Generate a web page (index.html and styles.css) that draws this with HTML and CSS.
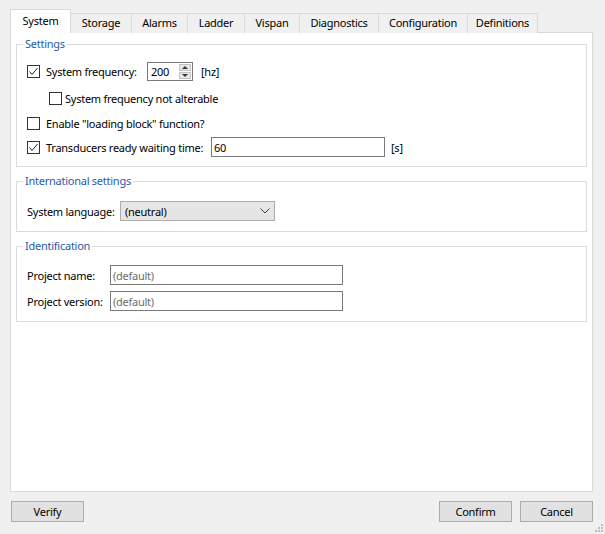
FILE: index.html
```html
<!DOCTYPE html>
<html>
<head>
<meta charset="utf-8">
<link rel="stylesheet" href="styles.css">
</head>
<body>
<div class="window">
  <div class="tabs">
    <div class="tab active">System</div>
    <div class="tab">Storage</div>
    <div class="tab">Alarms</div>
    <div class="tab">Ladder</div>
    <div class="tab">Vispan</div>
    <div class="tab">Diagnostics</div>
    <div class="tab">Configuration</div>
    <div class="tab">Definitions</div>
  </div>
  <div class="panel">
    <fieldset class="group g-settings">
      <legend>Settings</legend>
      <div class="row r1">
        <span class="check on"><svg viewBox="0 0 13 13" width="13" height="13"><path d="M2.5 6.5 L5 9.5 L10.5 3" fill="none" stroke="#222" stroke-width="1"/></svg></span>
        <span class="lbl">System frequency:</span>
        <span class="spin"><span class="spin-val">200</span><span class="spin-btns"><span class="sb up"></span><span class="sb down"></span></span></span>
        <span class="unit">[hz]</span>
      </div>
      <div class="row r2 indent">
        <span class="check"></span>
        <span class="lbl">System frequency not alterable</span>
      </div>
      <div class="row r3">
        <span class="check"></span>
        <span class="lbl">Enable "loading block" function?</span>
      </div>
      <div class="row r4">
        <span class="check on"><svg viewBox="0 0 13 13" width="13" height="13"><path d="M2.5 6.5 L5 9.5 L10.5 3" fill="none" stroke="#222" stroke-width="1"/></svg></span>
        <span class="lbl w-trans">Transducers ready waiting time:</span>
        <span class="input wide">60</span>
        <span class="unit s">[s]</span>
      </div>
    </fieldset>
    <fieldset class="group g-intl">
      <legend>International settings</legend>
      <div class="row">
        <span class="lbl w-lang">System language:</span>
        <span class="select"><span>(neutral)</span><svg width="10" height="6" viewBox="0 0 10 6"><path d="M0.5 0.5 L5 5 L9.5 0.5" fill="none" stroke="#444" stroke-width="1"/></svg></span>
      </div>
    </fieldset>
    <fieldset class="group g-ident">
      <legend>Identification</legend>
      <div class="row">
        <span class="lbl w-proj">Project name:</span>
        <span class="input proj ph">(default)</span>
      </div>
      <div class="row r-ver">
        <span class="lbl w-proj">Project version:</span>
        <span class="input proj ph">(default)</span>
      </div>
    </fieldset>
  </div>
  <div class="buttons">
    <button class="btn">Verify</button>
    <span class="spacer"></span>
    <button class="btn">Confirm</button>
    <button class="btn">Cancel</button>
  </div>
  <svg class="grip" width="9" height="9" viewBox="0 0 9 9">
    <rect x="7" y="1" width="2" height="2" fill="#bcbcbc"/>
    <rect x="4" y="4" width="2" height="2" fill="#bcbcbc"/>
    <rect x="7" y="4" width="2" height="2" fill="#bcbcbc"/>
    <rect x="1" y="7" width="2" height="2" fill="#bcbcbc"/>
    <rect x="4" y="7" width="2" height="2" fill="#bcbcbc"/>
    <rect x="7" y="7" width="2" height="2" fill="#bcbcbc"/>
  </svg>
</div>
</body>
</html>
```
FILE: styles.css
```css
* { box-sizing: border-box; }
html, body { margin: 0; padding: 0; }
body {
  background: #f0f0f0;
  font-family: "Noto Sans", "Open Sans", sans-serif;
  font-size: 11px;
  letter-spacing: -0.25px;
  color: #000;
}
.window {
  position: relative;
  width: 605px;
  height: 534px;
  display: flex;
  flex-direction: column;
}
.tabs {
  display: flex;
  align-items: flex-end;
  height: 33px;
  padding-left: 10px;
  position: relative;
  z-index: 1;
}
.tab {
  height: 20px;
  border: 1px solid #d9d9d9;
  border-bottom: none;
  margin-left: -1px;
  background: #f0f0f0;
  display: flex;
  align-items: center;
  justify-content: center;
  line-height: 1;
  padding-bottom: 2px;
}
.tab:nth-child(1) { width: 61px; margin-left: 0; }
.tab:nth-child(2) { width: 61px; margin-left: -1px; }
.tab:nth-child(3) { width: 57px; }
.tab:nth-child(4) { width: 58px; }
.tab:nth-child(5) { width: 56px; }
.tab:nth-child(6) { width: 80px; }
.tab:nth-child(7) { width: 90px; }
.tab:nth-child(8) { width: 71px; }
.tab.active {
  height: 24px;
  background: #fff;
  padding-bottom: 2px;
}
.tab.active + .tab { border-left: none; margin-left: 0; }
.panel {
  margin: -1px 12px 0 10px;
  height: 460px;
  background: #fff;
  border: 1px solid #d9d9d9;
  padding: 3px 5px 0 5px;
}
.group {
  margin: 0;
  padding: 0 10px;
  border: 1px solid #dcdcdc;
  min-width: 0;
}
.group legend {
  color: #1f5ca6;
  padding: 0 2px;
  margin-left: -4px;
  line-height: 16px;
  font-size: 11px;
}
.g-intl, .g-ident { margin-top: 6px; }
.g-settings { padding-bottom: 9px; }
.g-intl { padding-bottom: 10px; }
.g-ident { padding-bottom: 10px; }
.row {
  display: flex;
  align-items: center;
  height: 20px;
}
.r1 { margin-top: 9px; }
.r2 { margin-top: 7px; }
.r3 { margin-top: 5px; }
.r4 { margin-top: 4px; }
.g-intl .row { margin-top: 12px; }
.g-ident .row { margin-top: 11px; }
.g-ident .row.r-ver { margin-top: 6px; }
.indent { padding-left: 22px; }
.check {
  width: 13px;
  height: 13px;
  border: 1px solid #333;
  background: #fff;
  flex: none;
  margin-right: 6px;
  display: flex;
}
.indent .check { margin-right: 3px; }
.check svg { margin: -1px; }
.lbl { white-space: nowrap; }
.r1 .lbl { width: 101px; }
.spin {
  width: 46px;
  height: 19px;
  border: 1px solid #7a7a7a;
  display: flex;
  align-items: center;
  justify-content: space-between;
  padding-left: 3px;
}
.spin-btns {
  width: 12px;
  height: 15px;
  margin-right: 1px;
  display: flex;
  flex-direction: column;
  gap: 1px;
}
.sb {
  flex: 1;
  background: #e6e6e6;
  border: 1px solid #c4c4c4;
  display: flex;
  align-items: center;
  justify-content: center;
}
.sb::after {
  content: "";
  border-left: 3px solid transparent;
  border-right: 3px solid transparent;
}
.sb.up::after { border-bottom: 3px solid #333; }
.sb.down::after { border-top: 3px solid #333; }
.unit { margin-left: 8px; }
.unit.s { margin-left: 6px; }
.w-trans { width: 165px; }
.input {
  height: 20px;
  border: 1px solid #7a7a7a;
  background: #fff;
  display: flex;
  align-items: center;
  padding-left: 2px;
}
.input.wide { width: 174px; }
.input.ph { color: #6d6d6d; }
.w-lang { width: 93px; }
.select {
  width: 155px;
  height: 20px;
  border: 1px solid #adadad;
  background: #e5e5e5;
  display: flex;
  align-items: center;
  justify-content: space-between;
  padding: 0 4px 0 4px;
}
.w-proj { width: 83px; }
.input.proj { width: 233px; }
.buttons {
  display: flex;
  align-items: center;
  gap: 8px;
  padding: 0 12px 0 11px;
  margin-top: 9px;
}
.spacer { flex: 1; }
.btn {
  width: 73px;
  height: 21px;
  border: 1px solid #adadad;
  background: #e1e1e1;
  font-family: inherit;
  font-size: 11px;
  letter-spacing: -0.25px;
  color: #000;
  padding: 0;
}
.grip { position: absolute; right: 2px; bottom: 2px; }
```
